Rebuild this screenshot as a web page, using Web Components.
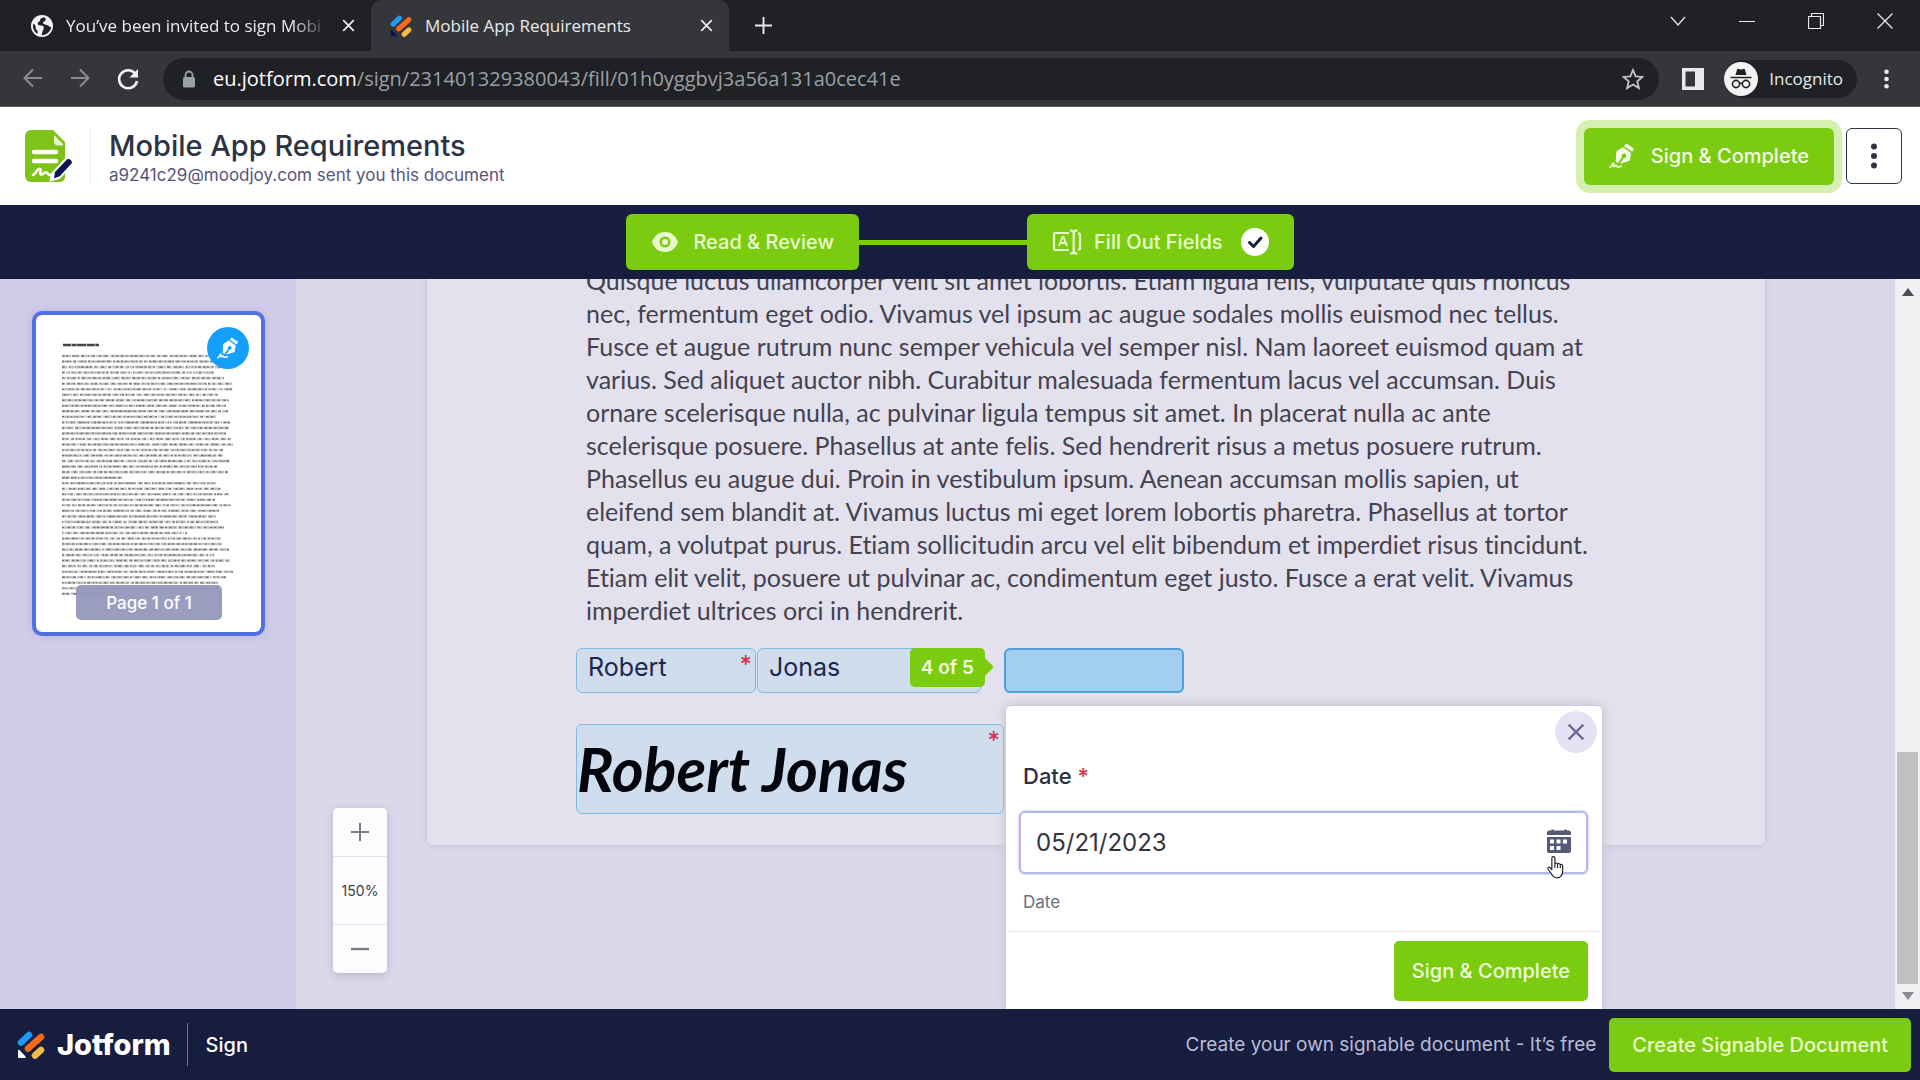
<!DOCTYPE html>
<html lang="en">
<head>
<meta charset="utf-8">
<title>Mobile App Requirements</title>
<style>
html,body{height:100%;margin:0}
body{display:flex;flex-direction:column;overflow:hidden;font-family:Inter,"Liberation Sans",sans-serif;color:#2c3345;background:#dad9ea}
sign-workspace{flex:1;min-height:0}
</style>
</head>
<body>
<browser-bar></browser-bar>
<sign-header>
  <span slot="title">Mobile App Requirements</span>
  <span slot="sender">a9241c29@moodjoy.com sent you this document</span>
</sign-header>
<step-bar></step-bar>
<sign-workspace></sign-workspace>
<sign-footer></sign-footer>

<script>
const base = `*{box-sizing:border-box}button,input{font:inherit;color:inherit;margin:0;border:0;background:none;padding:0}button{cursor:pointer}svg{display:block;flex:none}a{color:inherit;text-decoration:none}`;

function define(name, html) {
  const tpl = document.createElement('template');
  tpl.innerHTML = html;
  customElements.define(name, class extends HTMLElement {
    constructor() {
      super();
      this.attachShadow({ mode: 'open' }).append(tpl.content.cloneNode(true));
    }
  });
}

const ICONS = {
  pen: ['0 0 28 28', `<g fill="currentColor"><path d="M17.5 1.7c.5-.8 1.500-1 2.300-.5l6 4.200c.8.500.9 1.500.4 2.300l-1.300 1.700-8.600-6z"/><path fill-rule="evenodd" d="M15 4.500l8.800 6.200-1.300 7.600c-.1.500-.4.900-.8 1.100l-10 3.200 4.200-6.300a2.400 2.400 0 1 0-1.800-1.200L9.500 21.500l-2.300-1.300L7.800 9.700c0-.5.3-.9.7-1.100z"/></g><path d="M1 26.500c2-1 3-5 3.600-5 1 0-.3 4 .6 4s1.800-1.800 2.700-1.400c.8.400.6 2 1.600 2s1.600-1.200 3.800-1" fill="none" stroke="currentColor" stroke-width="1.800" stroke-linecap="round"/>`],
  eye: ['0 0 28 28', `<path fill="currentColor" fill-rule="evenodd" d="M14 4C7 4 2.500 9 1 14c1.500 5 6 10 13 10s11.500-5 13-10C25.500 9 21 4 14 4zm0 4.500a5.500 5.500 0 1 1 0 11 5.500 5.500 0 0 1 0-11z"/><circle cx="14" cy="14" r="3" fill="currentColor"/>`],
  field: ['0 0 30 26', `<g fill="none" stroke="currentColor" stroke-width="2.200"><path d="M17 4H3.500A1.500 1.500 0 0 0 2 5.500v14A1.500 1.500 0 0 0 3.500 21H17M26 4.300c1.200 0 2 .6 2 1.700v13c0 1.100-.8 1.700-2 1.700M18 1.300c2.500 0 3.700.7 3.700 2.500v18.400c0 1.800-1.200 2.500-3.700 2.500M25.500 1.300c-2.500 0-3.800.7-3.800 2.500M25.500 24.700c-2.500 0-3.800-.7-3.800-2.500"/><path d="M7 17l3.500-9h1L15 17M8.200 14h5.600" stroke-width="1.800"/></g>`],
  check: ['0 0 28 28', `<circle cx="14" cy="14" r="14" fill="#fff"/><path d="M8.500 14.500l4 4 7.500-8.500" fill="none" stroke="#171d3f" stroke-width="3" stroke-linecap="round" stroke-linejoin="round"/>`],
  dots: ['0 0 6 26', `<g fill="currentColor"><circle cx="3" cy="3.500" r="3"/><circle cx="3" cy="13" r="3"/><circle cx="3" cy="22.500" r="3"/></g>`],
  x: ['0 0 16 16', `<path d="M1.500 1.500l13 13M14.500 1.500l-13 13" fill="none" stroke="currentColor" stroke-width="2.200"/>`],
  plus: ['0 0 18 18', `<path d="M9 0v18M0 9h18" fill="none" stroke="currentColor" stroke-width="2"/>`],
  minus: ['0 0 18 18', `<path d="M0 9h18" fill="none" stroke="currentColor" stroke-width="2.400"/>`],
  jot: ['0 0 28 28', `<g stroke-linecap="round" stroke-width="6.500"><path d="M4 11.500L12 4" stroke="#1e9bf5"/><path d="M11 17.500L24 6" stroke="#f26a1b"/><path d="M18 24.500l6-5.500" stroke="#f3b94a"/></g><path d="M1 19.500c0-.8.9-1.100 1.500-.5l6 6.500c.6.700.2 1.500-.6 1.500H2.300C1.500 27 1 26.500 1 25.700z" fill="var(--jot-corner,#fff)"/>`],
  globe: ['0 0 24 24', `<circle cx="12" cy="12" r="12" fill="#f1f3f4"/><path d="M14 2.500c-2 1-4 1-4 3s-2 1.500-2.500 3 .5 3 3 3 3.500.5 3.500 2.500-1 2.500-1.500 4-1 3.500-.5 4c5-.5 9.500-4 10-9-1 .5-2 0-2.500-1s-2-1-3.500-1.500-3-.5-3-2 2.500-1.500 3-3-.5-2.500-2-3zM2.500 9.500c-1 4 .5 8.500 4.500 11 .5-1.500.5-3-.5-4S5 14.500 5 13s-1-3-2.500-3.500z" fill="#202124"/>`],
  back: ['0 0 20 20', `<path d="M19 10H2M10 1.500L1.500 10l8.500 8.500" fill="none" stroke="currentColor" stroke-width="2"/>`],
  fwd: ['0 0 20 20', `<path d="M1 10h17M10 1.500l8.500 8.500-8.500 8.500" fill="none" stroke="currentColor" stroke-width="2"/>`],
  reload: ['0 0 22 22', `<path d="M18.500 6A9 9 0 1 0 20 13" fill="none" stroke="currentColor" stroke-width="2.600"/><path d="M21 1v8.500h-8.500z" fill="currentColor"/>`],
  lock: ['0 0 14 18', `<rect x="1" y="7" width="12" height="10.500" rx="1.500" fill="currentColor"/><path d="M3.500 8V5a3.500 3.500 0 0 1 7 0v3" fill="none" stroke="currentColor" stroke-width="1.800"/>`],
  star: ['0 0 22 22', `<path d="M11 2l2.700 6.300 6.800.6-5.200 4.500 1.600 6.700L11 16.500l-5.900 3.600 1.600-6.700L1.500 8.900l6.800-.6z" fill="none" stroke="currentColor" stroke-width="1.800"/>`],
  panel: ['0 0 22 22', `<path fill="currentColor" fill-rule="evenodd" d="M0 0h22v22H0zM3.500 3.500v15h9.500v-15z"/>`],
  incog: ['0 0 34 34', `<circle cx="17" cy="17" r="17" fill="#f1f3f4"/><path d="M11.500 13l1.600-5.500c.2-.6.700-.8 1.300-.6l2.600.7 2.600-.7c.6-.2 1.100 0 1.300.6l1.600 5.500z" fill="#202124"/><g fill="none" stroke="#202124" stroke-width="1.600"><path d="M6.500 15.500h21M15.500 21.500c1-.7 2-.7 3 0"/><circle cx="12" cy="22" r="3.600"/><circle cx="22" cy="22" r="3.600"/></g>`],
  chev: ['0 0 16 16', `<path d="M1 4l7 8 7-8" fill="none" stroke="currentColor" stroke-width="1.200"/>`],
  wmin: ['0 0 16 16', `<path d="M0 8.500h16" fill="none" stroke="currentColor"/>`],
  wmax: ['0 0 16 16', `<path d="M.5 3.500h12v12H.5zM3.500 3.500v-3h12v12h-3" fill="none" stroke="currentColor" stroke-width="1.200"/>`],
  wx: ['0 0 16 16', `<path d="M.5.5l15 15M15.500.5l-15 15" fill="none" stroke="currentColor" stroke-width="1.300"/>`],
  cal: ['0 0 24 24', `<path fill="currentColor" fill-rule="evenodd" d="M4 1.500C4 0 7 0 7 1.500h10C17 0 20 0 20 1.500h2c1 0 2 1 2 2V6H0V3.500c0-1 1-2 2-2zM0 8h24v14c0 1-1 2-2 2H2c-1 0-2-1-2-2zM3 10.500v4h4v-4zm6.500 0v4h4v-4zm6.500 0v4h4v-4zM3 17v4h4v-4zm6.500 0v4h4v-4z"/>`],
  doc: ['0 0 50 54', `<path d="M7 1h22l12 12v35a5 5 0 0 1-5 5H7a6 6 0 0 1-6-6V7a6 6 0 0 1 6-6z" fill="#7fc31a"/><path d="M30 6l9 9v1.500h-5a4 4 0 0 1-4-4z" fill="#e4f5c8"/><path d="M10 23h22M10 32h22" stroke="#fff" stroke-width="4.500" stroke-linecap="round"/><path d="M9 46c3-1 4-7 7-6 2 1-1 5 1 5.500s3-2.500 5-2 2 2.500 4 2.500h6" fill="none" stroke="#fff" stroke-width="2.600" stroke-linecap="round"/><path d="M29 45l13-14c1-1.500 6 2 5 3.500L35 48l-7 2z" fill="#fff" stroke="#fff" stroke-width="4"/><path d="M31 43l12-12.500c2-1.500 6 1.500 4.500 4L36 47l-6 2.500z" fill="#0a1551"/>`],
  hand: ['0 0 20 26', `<path d="M6.500 16V3.200a1.700 1.700 0 0 1 3.400 0V10c0-2 3-2 3 .3 0-1.800 3-1.600 3 .7 0-1.500 2.600-1.400 2.600.8V17c0 5-2 8-6 8-3.500 0-5-1.500-6.500-4.500l-3.800-5.300c-.8-1.500 1-2.700 2.300-1.500z" fill="#fff" stroke="#222" stroke-width="1.300" stroke-linejoin="round"/><path d="M9.900 10v4M12.900 10.500V14M15.900 11.500V14" stroke="#222" stroke-width="1.200"/>`]
};

customElements.define('ui-icon', class extends HTMLElement {
  connectedCallback() {
    if (this.shadowRoot) return;
    const [box, body] = ICONS[this.getAttribute('name')];
    const w = this.getAttribute('w'), h = this.getAttribute('h') || w;
    this.attachShadow({ mode: 'open' }).innerHTML =
      `<style>:host{display:inline-flex;flex:none}svg{display:block}</style><svg width="${w}" height="${h}" viewBox="${box}" aria-hidden="true">${body}</svg>`;
  }
});

define('browser-bar', `<style>${base}
:host{display:block;background:#202124;color:#e8eaed;font-family:"Open Sans","Noto Sans",sans-serif}
.tabs{display:flex;height:51px}
.tab{display:flex;align-items:center;gap:13px;padding:0 16px 0 31px;font-size:17px;width:371px;white-space:nowrap}
.tab .t{flex:1}
.tab.idle .t{mask-image:linear-gradient(90deg,#000 86%,transparent)}
.tab.on{background:#35363a;border-radius:10px 10px 0 0;width:358px;padding-left:19px;--jot-corner:#0a1551}
.new{padding:0 26px;display:flex;align-items:center}
.win{margin-left:auto;display:flex;gap:53px;padding:13px 27px 0 0;align-items:flex-start}
.bar{display:flex;align-items:center;height:56px;background:#35363a;border-bottom:1px solid #5b5c60;padding:0 31px 0 23px}
.nav{display:flex;gap:27px;color:#8a8c90}
.nav button:last-child{color:#f1f3f4}
.url{flex:1;display:flex;align-items:center;gap:17px;height:42px;margin-left:24px;padding:0 15px 0 19px;border-radius:21px;background:#202124;color:#9aa0a6;font-size:20px}
.url .u{flex:1}.url b{font-weight:400;color:#fff}
.star{color:#c4c7cb}
.panel{margin:0 20px 0 23px}
.inc{display:flex;align-items:center;gap:11px;height:38px;border-radius:19px;background:#202124;padding:0 14px 0 0;font-size:17px;margin-right:27px}
button{display:flex}
</style>
<div class="tabs">
 <div class="tab idle"><ui-icon name="globe" w="22"></ui-icon><span class="t">You’ve been invited to sign Mobi</span><button aria-label="Close tab"><ui-icon name="x" w="13"></ui-icon></button></div>
 <div class="tab on"><ui-icon name="jot" w="22"></ui-icon><span class="t">Mobile App Requirements</span><button aria-label="Close tab"><ui-icon name="x" w="13"></ui-icon></button></div>
 <button class="new" aria-label="New tab"><ui-icon name="plus" w="17"></ui-icon></button>
 <div class="win"><button aria-label="Search tabs"><ui-icon name="chev" w="16"></ui-icon></button><button aria-label="Minimize"><ui-icon name="wmin" w="16"></ui-icon></button><button aria-label="Restore"><ui-icon name="wmax" w="16"></ui-icon></button><button aria-label="Close"><ui-icon name="wx" w="16"></ui-icon></button></div>
</div>
<div class="bar">
 <div class="nav"><button aria-label="Back"><ui-icon name="back" w="20"></ui-icon></button><button aria-label="Forward"><ui-icon name="fwd" w="20"></ui-icon></button><button aria-label="Reload"><ui-icon name="reload" w="22"></ui-icon></button></div>
 <div class="url"><ui-icon name="lock" w="14" h="18"></ui-icon><span class="u"><b>eu.jotform.com</b>/sign/231401329380043/fill/01h0yggbvj3a56a131a0cec41e</span><ui-icon class="star" name="star" w="22"></ui-icon></div>
 <ui-icon class="panel" name="panel" w="22"></ui-icon>
 <div class="inc"><ui-icon name="incog" w="34"></ui-icon><span>Incognito</span></div>
 <button aria-label="Menu"><ui-icon name="dots" w="5" h="20"></ui-icon></button>
</div>`);

define('sign-header', `<style>${base}
:host{display:flex;align-items:center;height:98px;background:#fff;padding:0 18px 0 24px}
.txt{display:flex;flex-direction:column;border-left:1px solid #ececf4;margin-left:16px;padding:3px 0 0 18px;height:56px;justify-content:center}
.title{font-size:29px;line-height:34px;font-weight:500}
.from{font-size:17px;line-height:24px;color:#57557a}
.go{margin-left:auto;display:flex;align-items:center;gap:16px;height:57px;padding:0 25px;border-radius:6px;background:#7bcc10;color:#f4fbe8;font-size:20px;font-weight:500;box-shadow:0 0 0 8px #d6f0b1}
.more{display:flex;align-items:center;justify-content:center;width:56px;height:56px;margin-left:12px;border:1px solid #2c3345;border-radius:6px}
</style>
<ui-icon name="doc" w="50" h="54"></ui-icon>
<div class="txt"><span class="title"><slot name="title"></slot></span><span class="from"><slot name="sender"></slot></span></div>
<button class="go"><ui-icon name="pen" w="26"></ui-icon>Sign &amp; Complete</button>
<button class="more" aria-label="More"><ui-icon name="dots" w="6" h="26"></ui-icon></button>`);

define('step-bar', `<style>${base}
:host{display:flex;align-items:center;justify-content:center;height:74px;background:#171d3f;color:#eafad0;font-size:20px;font-weight:500}
button{display:flex;align-items:center;height:56px;padding:0 25px;gap:14px;border-radius:6px;background:#7bcc10}
button+i+button{gap:12px}
i{width:168px;height:5px;background:#7bcc10}
.ok{margin-left:6px}
</style>
<button><ui-icon name="eye" w="28"></ui-icon>Read &amp; Review</button><i></i>
<button><ui-icon name="field" w="30" h="26"></ui-icon>Fill Out Fields<ui-icon class="ok" name="check" w="28"></ui-icon></button>`);

define('page-thumb', `<style>${base}
:host{display:block}
.card{position:relative;display:flex;flex-direction:column;width:100%;height:325px;border:4px solid #5271e0;border-radius:10px;background:#fff;box-shadow:0 0 8px #b9b6dc}
.lines{margin:22px 26px 0;filter:blur(.5px)}
.pen{position:absolute;right:12px;top:12px;width:42px;height:42px;border-radius:50%;background:#14a0fa;color:#fff;display:flex;align-items:center;justify-content:center}
.no{position:absolute;left:40px;right:39px;bottom:12px;height:35px;border-radius:5px;background:#9698bbf2;color:#fff;font-size:17px;font-weight:500;display:flex;align-items:center;justify-content:center}
</style>
<div class="card"><svg class="lines" width="173" height="262"></svg><span class="pen"><ui-icon name="pen" w="22"></ui-icon></span><span class="no">Page 1 of 1</span></div>`);

define('zoom-control', `<style>${base}
:host{display:flex;flex-direction:column;width:54px;border-radius:5px;background:#fdfdff;box-shadow:0 2px 8px #b4b2cc;color:#7b7b88}
button{display:flex;align-items:center;justify-content:center;height:48px}
output{display:flex;align-items:center;justify-content:center;height:69px;border:solid #e4e3ec;border-width:1px 0;font-size:14px;color:#3c3c46}
</style>
<button aria-label="Zoom in"><ui-icon name="plus" w="18"></ui-icon></button><output>150%</output><button aria-label="Zoom out"><ui-icon name="minus" w="18"></ui-icon></button>`);

define('date-popup', `<style>${base}
:host{display:flex;flex-direction:column;width:598px;height:308px;background:#fff;border:1px solid #cfcddd;border-radius:6px;box-shadow:0 0 10px #c3c1d4}
.top{display:flex;justify-content:flex-end;padding:5px 5px 0}
.close{display:flex;align-items:center;justify-content:center;width:42px;height:42px;border-radius:50%;background:#e5e2f5;color:#6f6c93}
label{font-size:22px;line-height:26px;font-weight:500;margin:10px 18px 0 17px;color:#2c2f3d}
em{font-style:normal;color:#d6304f}
.box{display:flex;align-items:center;height:63px;margin:22px 14px 0 13px;border:2px solid #b3b8ea;border-radius:6px;padding:0 15px;box-shadow:0 0 0 1px #dcdff7}
input{flex:1;min-width:0;font-size:24px;outline:0;color:#33343f}
.box button{position:relative;color:#555a78}
.hand{position:absolute;left:-1px;top:26px}
small{font-size:17px;line-height:20px;color:#6b6d80;margin:18px 18px 0 17px}
.foot{display:flex;justify-content:flex-end;margin:19px 2px 0;padding:9px 12px 0 0;border-top:1px solid #e6e7f0}
.go{height:60px;padding:0 18px;border-radius:5px;background:#7bcc10;color:#eefbd8;font-size:20px;font-weight:500}
</style>
<div class="top"><button class="close" aria-label="Close"><ui-icon name="x" w="18"></ui-icon></button></div>
<label for="d">Date <em>*</em></label>
<div class="box"><input id="d" value="05/21/2023"><button aria-label="Open calendar"><ui-icon name="cal" w="24"></ui-icon><ui-icon class="hand" name="hand" w="18" h="24"></ui-icon></button></div>
<small>Date</small>
<div class="foot"><button class="go">Sign &amp; Complete</button></div>`);

define('sign-workspace', `<style>${base}
:host{display:flex;overflow:hidden;background:#dad9ea}
aside{width:296px;background:#cfcbe8;padding:32px 31px 0 32px}
main{flex:1;position:relative;display:flex;padding:0 130px 0 131px;min-width:0;align-items:flex-start}
zoom-control{position:absolute;left:37px;bottom:36px}
article{flex:1;min-width:0;background:#e3e1ed;border-radius:0 0 5px 5px;box-shadow:0 0 7px #bdbbd0;padding:0 0 31px 149px}
p{margin:-15px 0 21px 10px;font:25px/33px Lato,"Open Sans",sans-serif;font-variant-ligatures:none;color:#45424f;white-space:nowrap}
.row{display:flex;align-items:flex-start;gap:1px}
.f{position:relative;height:45px;border:1px solid #7fbbe6;border-radius:6px;background:#cfddec}
.f input{width:100%;height:100%;padding:0 11px 8px;font-size:25px;color:#1b2750;outline:0;border-radius:4px}
.f.a{width:180px}.f.b{width:224px}
.f.c{width:180px;margin-left:22px;background:#a2cfef;border:2px solid #4f9fdb}
.f em{position:absolute;right:3px;top:4px;font:500 24px/24px Inter,sans-serif;color:#d6304f}
.tag{position:absolute;isolation:isolate;right:-5px;top:-1px;display:flex;align-items:center;height:39px;padding:0 11px;border-radius:5px;background:#7bcc10;color:#f0fbdc;font-size:19px;font-weight:600;white-space:nowrap}
.tag::after{content:"";position:absolute;right:-6px;top:12px;width:14px;height:14px;border-radius:2px;background:#7bcc10;transform:rotate(45deg);z-index:-1}
date-popup{position:absolute;left:-1px;top:55px}
.s{width:428px;height:90px;margin-top:31px;display:block;text-align:left}
.s span{display:block;font:italic 700 61px/78px Lato,"Liberation Sans",sans-serif;color:#05060d;white-space:nowrap}
.bar{width:25px;background:#f0f0f3;display:flex;flex-direction:column;align-items:center;padding:9px 0}
.bar i{width:0;height:0;border:6px solid transparent;border-top:0;border-bottom:8px solid #4d4d52}
.bar b{width:21px;height:232px;background:#c1c1c4;margin-top:auto}
.bar i.d{border-bottom:0;border-top:8px solid #8c8c90;margin-top:8px}
</style>
<aside><page-thumb></page-thumb></aside>
<main>
<article>
<p>Quisque luctus ullamcorper velit sit amet lobortis. Etiam ligula felis, vulputate quis rhoncus<br>nec, fermentum eget odio. Vivamus vel ipsum ac augue sodales mollis euismod nec tellus.<br>Fusce et augue rutrum nunc semper vehicula vel semper nisl. Nam laoreet euismod quam at<br>varius. Sed aliquet auctor nibh. Curabitur malesuada fermentum lacus vel accumsan. Duis<br>ornare scelerisque nulla, ac pulvinar ligula tempus sit amet. In placerat nulla ac ante<br>scelerisque posuere. Phasellus at ante felis. Sed hendrerit risus a metus posuere rutrum.<br>Phasellus eu augue dui. Proin in vestibulum ipsum. Aenean accumsan mollis sapien, ut<br>eleifend sem blandit at. Vivamus luctus mi eget lorem lobortis pharetra. Phasellus at tortor<br>quam, a volutpat purus. Etiam sollicitudin arcu vel elit bibendum et imperdiet risus tincidunt.<br>Etiam elit velit, posuere ut pulvinar ac, condimentum eget justo. Fusce a erat velit. Vivamus<br>imperdiet ultrices orci in hendrerit.</p>
<div class="row">
<div class="f a"><input aria-label="First name" value="Robert"><em>*</em></div>
<div class="f b"><input aria-label="Last name" value="Jonas"><span class="tag">4 of 5</span></div>
<div class="f c"><input aria-label="Date field"><date-popup></date-popup></div>
</div>
<button class="f s"><span>Robert Jonas</span><em>*</em></button>
</article>
<zoom-control></zoom-control>
</main>
<div class="bar"><i></i><b></b><i class="d"></i></div>`);

define('sign-footer', `<style>${base}
:host{display:flex;align-items:center;height:71px;background:#171d3f;color:#fff;padding:0 9px 0 17px}
.logo{display:flex;align-items:center;gap:12px;font-size:29px;font-weight:800}
.sign{border-left:1px solid #6f7391;height:43px;display:flex;align-items:center;margin-left:16px;padding-left:18px;font-size:20px;font-weight:500}
.own{margin-left:auto;font-size:19px;color:#b9bbd6}
.make{display:flex;align-items:center;height:54px;padding:0 23px;margin-left:13px;border-radius:5px;background:#7bcc10;color:#e9fbc9;font-size:20px;font-weight:500}
</style>
<a class="logo" href="#"><ui-icon name="jot" w="28"></ui-icon>Jotform</a><span class="sign">Sign</span>
<span class="own">Create your own signable document - It’s free</span>
<a class="make" href="#">Create Signable Document</a>`);

/* Fill the thumbnail with word-like dashes, one row per line of the page. */
function drawThumb(svg) {
  let seed = 7;
  const rnd = () => (seed = (seed * 16807) % 2147483647) / 2147483647;
  let out = '<path d="M1 8h36" stroke="#444" stroke-width="2.600" stroke-dasharray="8 .6 5 .5 9 .6"/>';
  for (let i = 0; i < 44; i++) {
    const short = i === 22 || i === 43 ? 60 : i === 32 ? 125 : 0;
    const end = short || 152 + rnd() * 20;
    for (let pass = 0; pass < 2; pass++) {
      const dash = Array.from({ length: 22 }, (_, k) => k % 2 ? (pass ? 1 + rnd() * 4 : 1) : 1 + rnd() * (pass ? 2 : 9)).map(v => v.toFixed(1)).join(' ');
      out += `<path d="M0 ${(19 + i * 5.53).toFixed(1)}H${end.toFixed(0)}" stroke="${pass ? '#777' : '#c4c4c4'}" stroke-width="${pass ? 1.5 : 2.6}" stroke-dasharray="${dash}"/>`;
    }
  }
  svg.innerHTML = out;
}
const ws = document.querySelector('sign-workspace').shadowRoot;
drawThumb(ws.querySelector('page-thumb').shadowRoot.querySelector('.lines'));
</script>
</body>
</html>
